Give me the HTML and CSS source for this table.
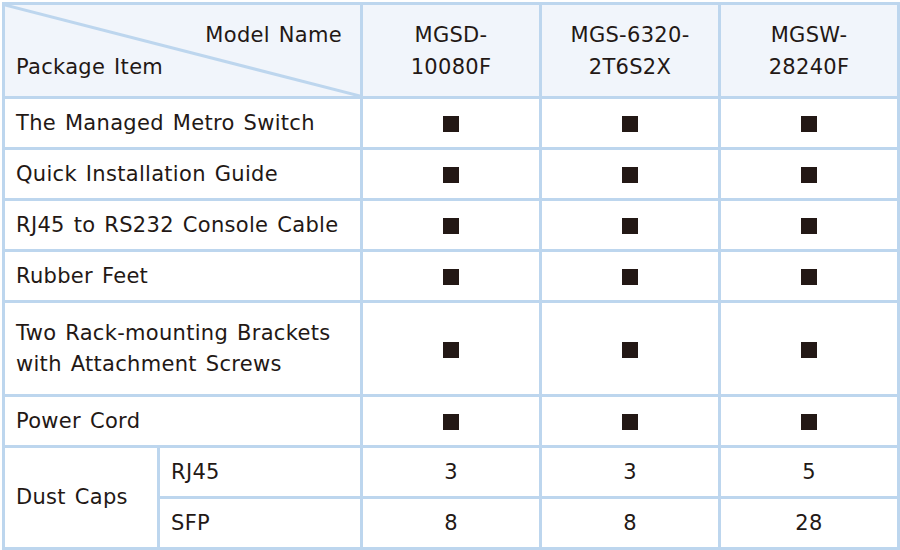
FILE: index.html
```html
<!DOCTYPE html>
<html>
<head>
<meta charset="utf-8">
<link rel="stylesheet" href="styles.css">
</head>
<body>
<table class="pkg">
  <colgroup>
    <col class="c-sub1">
    <col class="c-sub2">
    <col class="c-model">
    <col class="c-model">
    <col class="c-model">
  </colgroup>
  <thead>
    <tr class="head">
      <th colspan="2" class="corner">
        <svg class="diag" viewBox="0 0 100 100" preserveAspectRatio="none"><line x1="0" y1="0" x2="100" y2="100" /></svg>
        <div class="corner-top">Model Name</div>
        <div class="corner-bottom">Package Item</div>
      </th>
      <th class="model">MGSD-<br>10080F</th>
      <th class="model">MGS-6320-<br>2T6S2X</th>
      <th class="model">MGSW-<br>28240F</th>
    </tr>
  </thead>
  <tbody>
    <tr class="row">
      <td colspan="2" class="item">The Managed Metro Switch</td>
      <td class="mark"><span class="sq"></span></td>
      <td class="mark"><span class="sq"></span></td>
      <td class="mark"><span class="sq"></span></td>
    </tr>
    <tr class="row">
      <td colspan="2" class="item">Quick Installation Guide</td>
      <td class="mark"><span class="sq"></span></td>
      <td class="mark"><span class="sq"></span></td>
      <td class="mark"><span class="sq"></span></td>
    </tr>
    <tr class="row">
      <td colspan="2" class="item">RJ45 to RS232 Console Cable</td>
      <td class="mark"><span class="sq"></span></td>
      <td class="mark"><span class="sq"></span></td>
      <td class="mark"><span class="sq"></span></td>
    </tr>
    <tr class="row">
      <td colspan="2" class="item">Rubber Feet</td>
      <td class="mark"><span class="sq"></span></td>
      <td class="mark"><span class="sq"></span></td>
      <td class="mark"><span class="sq"></span></td>
    </tr>
    <tr class="row tall">
      <td colspan="2" class="item two">Two Rack-mounting Brackets<br>with Attachment Screws</td>
      <td class="mark"><span class="sq"></span></td>
      <td class="mark"><span class="sq"></span></td>
      <td class="mark"><span class="sq"></span></td>
    </tr>
    <tr class="row">
      <td colspan="2" class="item">Power Cord</td>
      <td class="mark"><span class="sq"></span></td>
      <td class="mark"><span class="sq"></span></td>
      <td class="mark"><span class="sq"></span></td>
    </tr>
    <tr class="row">
      <td rowspan="2" class="item">Dust Caps</td>
      <td class="item">RJ45</td>
      <td class="num">3</td>
      <td class="num">3</td>
      <td class="num">5</td>
    </tr>
    <tr class="row">
      <td class="item">SFP</td>
      <td class="num">8</td>
      <td class="num">8</td>
      <td class="num">28</td>
    </tr>
  </tbody>
</table>
</body>
</html>
```

FILE: styles.css
```css
html, body {
  margin: 0;
  padding: 0;
  background: #ffffff;
}

body {
  padding: 2px 0 0 2px;
  font-family: "DejaVu Sans", Verdana, sans-serif;
  color: #231815;
}

.pkg {
  border-collapse: collapse;
  table-layout: fixed;
  width: 895px;
  font-size: 21px;
  letter-spacing: 0.3px;
  word-spacing: 2px;
}

.c-sub1 { width: 155px; }
.c-sub2 { width: 203px; }
.c-model { width: 179px; }

.pkg th,
.pkg td {
  border: 3px solid #bdd6ee;
  padding: 0;
  font-weight: normal;
}

.head th {
  background: #f1f5fb;
  height: 91px;
  line-height: 32px;
}

.pkg .corner {
  position: relative;
  text-align: left;
  padding: 0 18px 0 11px;
}

.diag {
  position: absolute;
  left: 0;
  top: 0;
  width: 100%;
  height: 100%;
}

.diag line {
  stroke: #bdd6ee;
  stroke-width: 3px;
  vector-effect: non-scaling-stroke;
}

.corner-top {
  position: relative;
  text-align: right;
}

.corner-bottom {
  position: relative;
}

.model {
  text-align: center;
}

.row td {
  height: 48px;
}

.row.tall td {
  height: 91px;
}

.pkg .item {
  padding-left: 11px;
  text-align: left;
  line-height: 31px;
}

.mark,
.num {
  text-align: center;
}

.sq {
  display: inline-block;
  width: 16px;
  height: 16px;
  background: #231815;
  vertical-align: middle;
}
```
